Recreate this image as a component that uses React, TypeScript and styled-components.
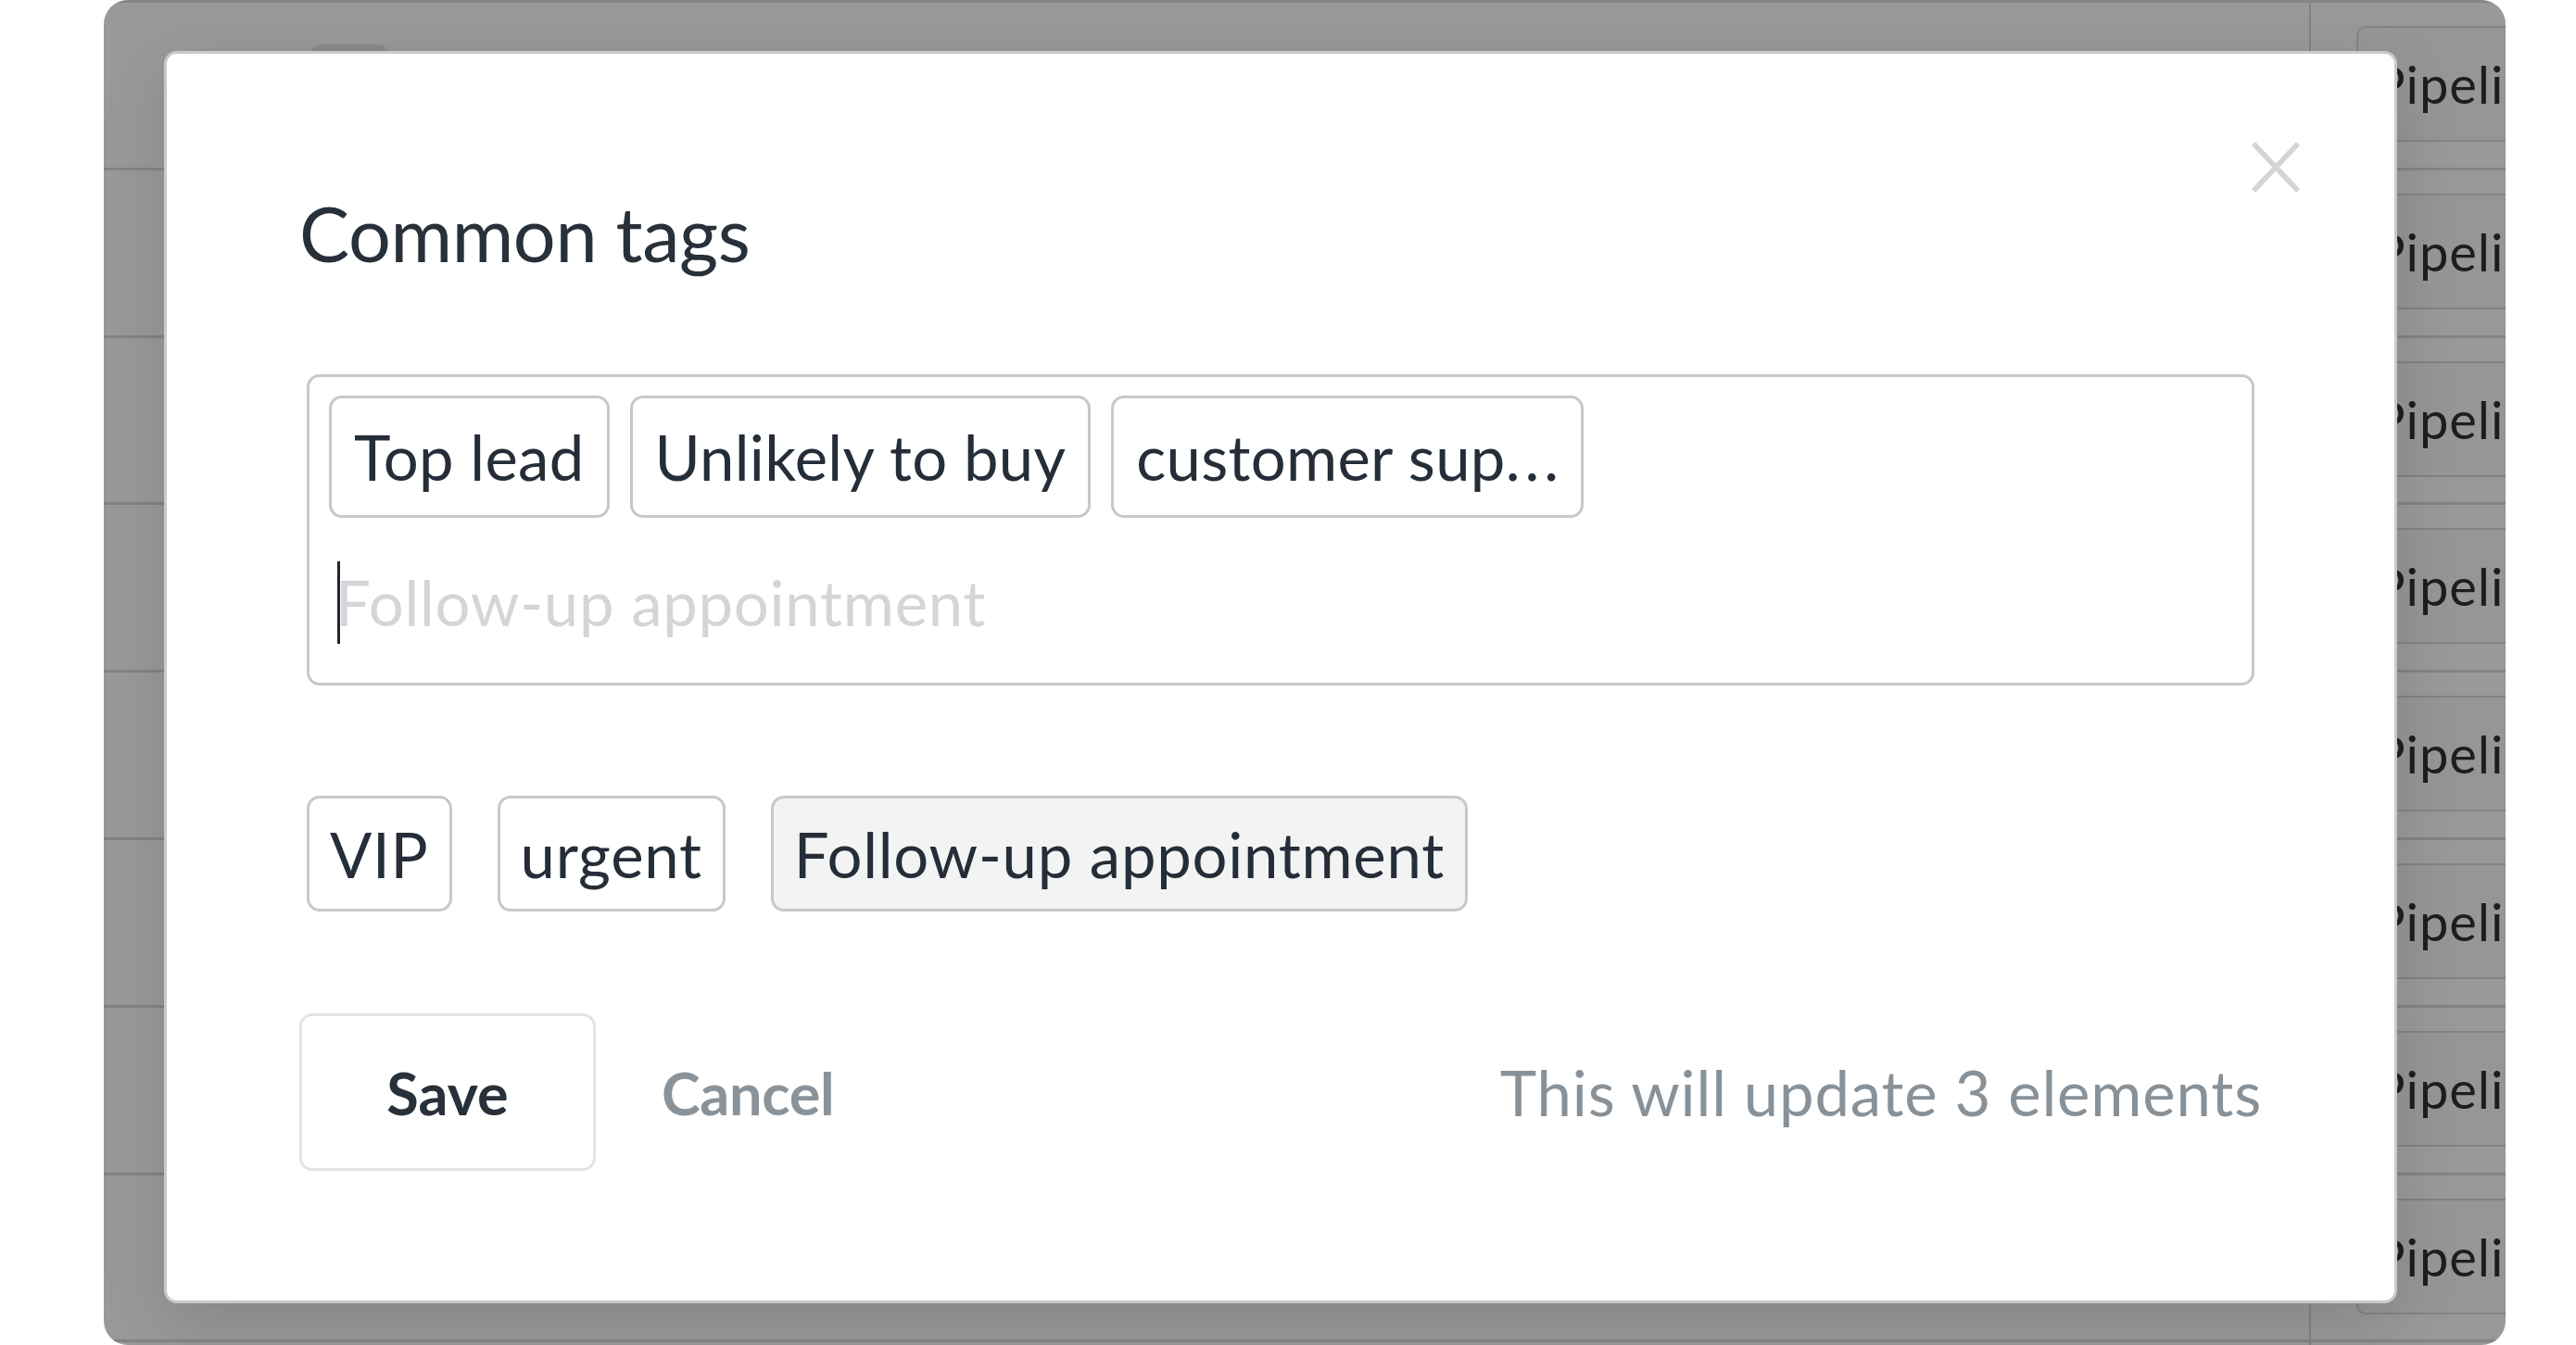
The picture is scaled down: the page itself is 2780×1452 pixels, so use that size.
import React from "react";
import styled, { createGlobalStyle } from "styled-components";

const GlobalStyle = createGlobalStyle`
  html, body {
    margin: 0;
    padding: 0;
    background: #ffffff;
  }
  body {
    font-family: Lato, "Open Sans", "Noto Sans", sans-serif;
    -webkit-font-smoothing: antialiased;
  }
  * { box-sizing: border-box; }
`;

const Page = styled.div`
  width: 2780px;
  height: 1452px;
  padding-left: 112px;
  background: #ffffff;
`;

const Frame = styled.div`
  position: relative;
  width: 2592px;
  height: 1452px;
  border-radius: 26px;
  overflow: hidden;
  background: #ffffff;
`;

/* ---------- application behind the dialog ---------- */

const AppBg = styled.div`
  display: flex;
  flex-direction: column;
  height: 100%;
  border-top: 3px solid #dcdcdc;
  font-family: Lato, sans-serif;
  color: #333333;
`;

const Row = styled.div`
  display: grid;
  grid-template-columns: 2380px 1fr;
  flex: 0 0 180.8px;
  height: 180.8px;
  border-bottom: 3px solid #dadada;
`;

const MainCell = styled.div<{ $withBump?: boolean }>`
  padding: ${(p) => (p.$withBump ? "45px 0 0 224px" : "0")};
`;

const Bump = styled.div`
  width: 83px;
  height: 40px;
  border-radius: 10px;
  background: #e6e6e6;
`;

const SideCell = styled.div`
  border-left: 2px solid #dadada;
  padding: 25px 0 0 49px;
`;

const PipelineCard = styled.div`
  display: flex;
  align-items: center;
  width: 300px;
  height: 125px;
  padding-left: 17px;
  border: 2px solid #dadada;
  border-radius: 10px;
  background: #fbfbfb;
  font-size: 56px;
  letter-spacing: 1px;
  color: #333333;
  white-space: nowrap;
`;

const Backdrop = styled.div`
  position: absolute;
  inset: 0;
  background: rgba(0, 0, 0, 0.4);
`;

/* ---------- dialog ---------- */

const Modal = styled.div`
  position: absolute;
  left: 65px;
  top: 55px;
  width: 2410px;
  display: flex;
  flex-direction: column;
  padding: 145px 143px 140px;
  background: #ffffff;
  border: 3px solid #c9c9c9;
  border-radius: 14px;
  box-shadow: 0 22px 70px rgba(0, 0, 0, 0.13);
  font-family: Lato, sans-serif;
  color: #262e39;
`;

const CloseButton = styled.button`
  position: absolute;
  top: 94px;
  right: 101px;
  width: 54px;
  height: 57px;
  padding: 0;
  border: none;
  background: transparent;
  cursor: pointer;
  display: flex;
`;

const Title = styled.h2`
  margin: 0;
  font-size: 81px;
  line-height: 97px;
  font-weight: 400;
  letter-spacing: -0.4px;
  color: #283039;
`;

const Body = styled.div`
  margin: 0 8px;
  display: flex;
  flex-direction: column;
`;

const TagBox = styled.div`
  margin-top: 104px;
  padding: 20px 21px 42px;
  border: 3px solid #c8c8c8;
  border-radius: 14px;
  display: flex;
  flex-direction: column;
`;

const ChipRow = styled.div<{ $gap: number }>`
  display: flex;
  flex-wrap: wrap;
  gap: ${(p) => p.$gap}px;
`;

const Chip = styled.span<{ $tall?: boolean; $active?: boolean }>`
  display: inline-flex;
  align-items: center;
  padding: ${(p) => (p.$tall ? "23px 24px" : "20px 22px 19px")};
  border: 3px solid #c8c8c8;
  border-radius: 14px;
  background: ${(p) => (p.$active ? "#f3f3f3" : "#ffffff")};
  font-size: 67px;
  line-height: 80px;
  letter-spacing: ${(p) => (p.$tall ? "0.3px" : "0.75px")};
  color: #252d38;
  white-space: nowrap;
`;

const Dots = styled.span`
  letter-spacing: 5px;
  margin-right: -5px;
`;

const InputRow = styled.div`
  margin-top: 47px;
  height: 89px;
  padding-left: 9px;
  display: flex;
  align-items: flex-start;
`;

const Caret = styled.span`
  flex: 0 0 3px;
  width: 3px;
  height: 89px;
  background: #1d2631;
`;

const Placeholder = styled.span`
  margin-left: -5px;
  margin-top: 4px;
  font-size: 67px;
  line-height: 80px;
  letter-spacing: 0.75px;
  color: #d3d5d8;
  white-space: nowrap;
`;

const Suggestions = styled.div`
  margin-top: 119px;
`;

const Footer = styled.div`
  margin-top: 110px;
  display: flex;
  align-items: center;
`;

const SaveButton = styled.button`
  width: 320px;
  height: 170px;
  border: 3px solid #e3e3e3;
  border-radius: 14px;
  background: #ffffff;
  font-family: Lato, sans-serif;
  font-weight: 700;
  font-size: 63px;
  color: #283039;
  cursor: pointer;
`;

const CancelButton = styled.button`
  margin-left: 71px;
  padding: 0;
  border: none;
  background: transparent;
  font-family: Lato, sans-serif;
  font-weight: 700;
  font-size: 63px;
  letter-spacing: -0.3px;
  color: #8b939a;
  cursor: pointer;
`;

const Info = styled.span`
  margin-left: auto;
  font-size: 67px;
  line-height: 80px;
  letter-spacing: 0.85px;
  color: #899198;
`;

const CloseIcon = () => (
  <svg width="54" height="57" viewBox="0 0 54 57" fill="none">
    <line x1="3" y1="3" x2="51" y2="54" stroke="#d4d4d4" strokeWidth="5.5" />
    <line x1="51" y1="3" x2="3" y2="54" stroke="#d4d4d4" strokeWidth="5.5" />
  </svg>
);

const selectedTags: { label: string; truncated?: boolean }[] = [
  { label: "Top lead" },
  { label: "Unlikely to buy" },
  { label: "customer sup", truncated: true },
];
const suggestedTags = ["VIP", "urgent", "Follow-up appointment"];

export default function App() {
  const rows = Array.from({ length: 9 }, (_, i) => i);
  return (
    <>
      <GlobalStyle />
      <Page>
        <Frame>
          <AppBg>
            {rows.map((i) => (
              <Row key={i}>
                <MainCell $withBump={i === 0}>{i === 0 && <Bump />}</MainCell>
                <SideCell>
                  <PipelineCard>Pipeline</PipelineCard>
                </SideCell>
              </Row>
            ))}
          </AppBg>
          <Backdrop />
          <Modal role="dialog" aria-label="Common tags">
            <CloseButton aria-label="Close">
              <CloseIcon />
            </CloseButton>
            <Title>Common tags</Title>
            <Body>
              <TagBox>
                <ChipRow $gap={22}>
                  {selectedTags.map((t) => (
                    <Chip key={t.label} $tall>
                      {t.label}
                      {t.truncated && <Dots>...</Dots>}
                    </Chip>
                  ))}
                </ChipRow>
                <InputRow>
                  <Caret />
                  <Placeholder>Follow-up appointment</Placeholder>
                </InputRow>
              </TagBox>
              <Suggestions>
                <ChipRow $gap={49}>
                  {suggestedTags.map((t, i) => (
                    <Chip key={t} $active={i === 2}>
                      {t}
                    </Chip>
                  ))}
                </ChipRow>
              </Suggestions>
            </Body>
            <Footer>
              <SaveButton>Save</SaveButton>
              <CancelButton>Cancel</CancelButton>
              <Info>This will update 3 elements</Info>
            </Footer>
          </Modal>
        </Frame>
      </Page>
    </>
  );
}
